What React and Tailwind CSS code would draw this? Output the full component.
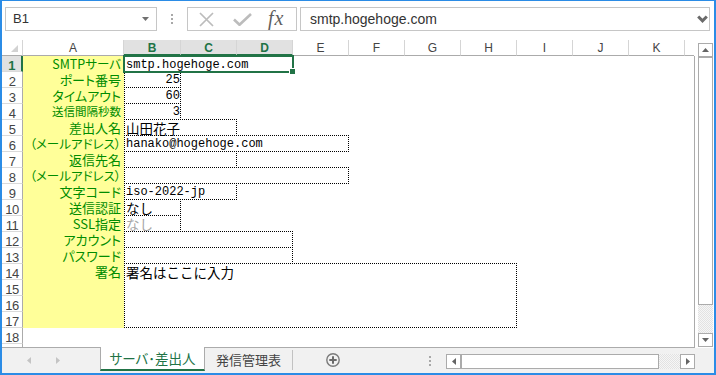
import React from "react";

const CJK = "font-['Noto_Sans_CJK_JP',sans-serif]";
const MONO = "font-['Liberation_Mono','Noto_Sans_CJK_JP',monospace]";

function VDots({ className = "" }) {
  return (
    <div className={"flex flex-col gap-[2px] shrink-0 " + className}>
      <span className="w-[2px] h-[2px] bg-[#a8a8a8]" />
      <span className="w-[2px] h-[2px] bg-[#a8a8a8]" />
      <span className="w-[2px] h-[2px] bg-[#a8a8a8]" />
    </div>
  );
}

function FormulaBar() {
  return (
    <div className="h-[39px] shrink-0 flex pl-[3px] pt-[6px] bg-white">
      <div className="w-[152px] h-[24px] shrink-0 border border-[#c6c6c6] flex items-center pl-[7px] pr-[7px]">
        <span className="flex-1 text-[13px] text-[#333]">B1</span>
        <svg width="7" height="4" viewBox="0 0 7 4">
          <path d="M0 0H7L3.5 4Z" fill="#707070" />
        </svg>
      </div>
      <VDots className="ml-[14px] mt-[7px]" />
      <div className="ml-[14px] w-[110px] h-[24px] shrink-0 border border-[#c6c6c6] flex items-center">
        <svg className="ml-[11px]" width="15" height="15" viewBox="0 0 15 15">
          <path d="M1 1L14 14M14 1L1 14" stroke="#bcbcbc" strokeWidth="1.7" />
        </svg>
        <svg className="ml-[19px]" width="19" height="13" viewBox="0 0 19 13">
          <path d="M1 6.5L6.5 11.8L18 1" stroke="#bcbcbc" strokeWidth="2.6" fill="none" />
        </svg>
        <span className="ml-[16px] font-['Liberation_Serif',serif] italic text-[20px] leading-none text-[#5f5f5f] tracking-[1px] -mt-[2px]">
          fx
        </span>
      </div>
      <div className="ml-[3px] w-[410px] h-[24px] shrink-0 border border-[#c6c6c6] flex items-center pl-[9px] pr-[1px]">
        <span className="flex-1 text-[14px] text-[#333]">smtp.hogehoge.com</span>
        <svg width="11" height="8" viewBox="0 0 11 8">
          <path d="M1.2 1.5L5.5 5.8L9.8 1.5" stroke="#6a6a6a" strokeWidth="3" fill="none" />
        </svg>
      </div>
    </div>
  );
}

const headCols = [
  ["A", "w-[101px]", false],
  ["B", "w-[57px]", true],
  ["C", "w-[56px]", true],
  ["D", "w-[56px]", true],
  ["E", "w-[56px]", false],
  ["F", "w-[56px]", false],
  ["G", "w-[56px]", false],
  ["H", "w-[56px]", false],
  ["I", "w-[56px]", false],
  ["J", "w-[56px]", false],
  ["K", "w-[56px]", false],
];

function HeaderRow() {
  return (
    <div className="h-[16px] shrink-0 flex text-[12px] leading-[17px]">
      <div className="w-[21px] h-[16px] shrink-0 border-r border-r-[#d5d5d5] border-b border-b-[#ababab] flex items-end justify-end pr-[4px] pb-[3px]">
        <svg width="7" height="7" viewBox="0 0 7 7">
          <path d="M7 0V7H0Z" fill="#d2d2d2" />
        </svg>
      </div>
      {headCols.map(([l, w, sel]) => (
        <div
          key={l}
          className={
            w +
            " h-[16px] shrink-0 text-center border-r border-r-[#d5d5d5] " +
            (sel
              ? "bg-[#e1e1e1] text-[#217346] font-bold border-b-2 border-b-[#217346]"
              : "text-[#444] border-b border-b-[#ababab]")
          }
        >
          {l}
        </div>
      ))}
      <div className="w-[9px] h-[16px] shrink-0 border-b border-b-[#ababab]" />
      <div className="w-[1px] h-[16px] shrink-0" />
    </div>
  );
}

const rowHeadStarts = [
  "row-start-1",
  "row-start-2",
  "row-start-3",
  "row-start-4",
  "row-start-5",
  "row-start-6",
  "row-start-7",
  "row-start-8",
  "row-start-9",
  "row-start-10",
  "row-start-11",
  "row-start-12",
  "row-start-13",
  "row-start-14",
  "row-start-15",
  "row-start-16",
  "row-start-17",
  "row-start-18",
];

const labels = [
  ["SMTPサーバ", "row-start-1", "text-[12.5px]"],
  ["ポート番号", "row-start-2", "text-[13px]"],
  ["タイムアウト", "row-start-3", "text-[13px]"],
  ["送信間隔秒数", "row-start-4", "text-[11.5px]"],
  ["差出人名", "row-start-5", "text-[13px]"],
  ["（メールアドレス）", "row-start-6", "text-[12.5px]"],
  ["返信先名", "row-start-7", "text-[13px]"],
  ["（メールアドレス）", "row-start-8", "text-[12.5px]"],
  ["文字コード", "row-start-9", "text-[13px]"],
  ["送信認証", "row-start-10", "text-[13px]"],
  ["SSL指定", "row-start-11", "text-[13px]"],
  ["アカウント", "row-start-12", "text-[13px]"],
  ["パスワード", "row-start-13", "text-[13px]"],
  ["署名", "row-start-14", "text-[13px]"],
  ["", "row-start-15", "text-[13px]"],
  ["", "row-start-16", "text-[13px]"],
  ["", "row-start-17", "text-[13px]"],
];

const boxes = [
  ["col-start-3 row-start-2", "25", "mono-r"],
  ["col-start-3 row-start-3", "60", "mono-r"],
  ["col-start-3 row-start-4", "3", "mono-r"],
  ["col-start-3 col-span-2 row-start-5", "山田花子", "cjk"],
  ["col-start-3 col-span-4 row-start-6", "hanako@hogehoge.com", "mono"],
  ["col-start-3 col-span-2 row-start-7", "", "mono"],
  ["col-start-3 col-span-4 row-start-8", "", "mono"],
  ["col-start-3 col-span-2 row-start-9", "iso-2022-jp", "mono"],
  ["col-start-3 row-start-10", "なし", "cjk"],
  ["col-start-3 row-start-11", "なし", "cjk-gray"],
  ["col-start-3 col-span-3 row-start-12", "", "mono"],
  ["col-start-3 col-span-3 row-start-13", "", "mono"],
  ["col-start-3 col-span-7 row-start-14 row-span-4", "署名はここに入力", "cjk"],
];

const boxStyle = {
  mono: MONO + " text-[12px] leading-[17px] text-black pl-[1px]",
  "mono-r": MONO + " text-[12px] leading-[17px] text-black text-right pr-0",
  cjk: CJK + " text-[13.5px] leading-[15px] pt-[1px] text-black pl-[1px]",
  "cjk-gray": CJK + " text-[13.5px] leading-[15px] pt-[1px] text-[#a6a6a6] pl-[1px]",
};

function Body() {
  return (
    <div className="grid grid-cols-[21px_101px_57px_repeat(9,56px)_9px] grid-rows-[repeat(18,16px)_3px] w-[693px] h-[292px] shrink-0 border-r border-b border-[#ababab] bg-white">
      {rowHeadStarts.map((rs, i) => (
        <div
          key={rs}
          className={
            "col-start-1 " +
            rs +
            " border-b border-b-[#dadada] text-center text-[13px] leading-[20px] tracking-[-0.5px] " +
            (i === 0
              ? "bg-[#e1e1e1] text-[#217346] font-bold border-r-2 border-r-[#217346]"
              : "text-[#444] border-r border-r-[#ababab]")
          }
        >
          {i + 1}
        </div>
      ))}
      <div className="col-start-1 row-start-19 border-r border-r-[#ababab]" />

      {labels.map(([t, rs, size], i) => (
        <div
          key={i}
          className={
            "col-start-2 " +
            rs +
            " bg-[#ffff99] flex justify-end pr-[3px] whitespace-nowrap text-[#008c00] leading-[15px] [font-feature-settings:'palt'] " +
            CJK +
            " " +
            size
          }
        >
          {t}
        </div>
      ))}

      {boxes.map(([pos, t, st], i) => (
        <div
          key={i}
          className={
            pos +
            " -mt-px border border-dotted border-black whitespace-nowrap " +
            boxStyle[st]
          }
        >
          {t}
        </div>
      ))}

      <div
        className={
          "col-start-3 col-span-3 row-start-1 -ml-px -mr-px -mt-px -mb-px border-2 border-[#217346] relative whitespace-nowrap pl-[1px] text-[12px] leading-[16px] text-black " +
          MONO
        }
      >
        smtp.hogehoge.com
        <span className="absolute right-[-4px] bottom-[-4px] w-[7px] h-[7px] bg-[#217346] border border-white" />
      </div>
    </div>
  );
}

function ScrollBtn({ dir }) {
  const paths = {
    left: "M4 0V7L0 3.5Z",
    right: "M0 0L4 3.5L0 7Z",
  };
  return (
    <div className="w-[15px] h-[15px] shrink-0 border border-[#ababab] bg-white flex items-center justify-center">
      <svg width="4" height="7" viewBox="0 0 4 7">
        <path d={paths[dir]} fill="#646464" />
      </svg>
    </div>
  );
}

const checker =
  "bg-[repeating-conic-gradient(#e2e2e2_0_25%,#f6f6f6_0_50%)] bg-[length:2px_2px]";

function VScroll() {
  return (
    <div className="w-[19px] shrink-0 pl-[3px] pt-[3px] flex flex-col bg-white">
      <div className="w-[15px] h-[14px] shrink-0 border border-[#ababab] bg-white flex items-center justify-center">
        <svg width="7" height="4" viewBox="0 0 7 4">
          <path d="M0 4L3.5 0L7 4Z" fill="#646464" />
        </svg>
      </div>
      <div className="w-[15px] h-[248px] shrink-0 border border-[#ababab] bg-white" />
      <div className={"w-[15px] h-[28px] shrink-0 " + checker} />
      <div className="w-[15px] h-[14px] shrink-0 border border-[#ababab] bg-white flex items-center justify-center">
        <svg width="7" height="4" viewBox="0 0 7 4">
          <path d="M0 0H7L3.5 4Z" fill="#646464" />
        </svg>
      </div>
    </div>
  );
}

function TabBar() {
  return (
    <div className="h-[25px] shrink-0 bg-[#f1f1f1] flex items-start">
      <div className="w-[98px] h-[25px] shrink-0 flex items-center pl-[25px]">
        <svg width="4" height="7" viewBox="0 0 4 7">
          <path d="M4 0V7L0 3.5Z" fill="#c4c4c4" />
        </svg>
        <svg className="ml-[25px]" width="4" height="7" viewBox="0 0 4 7">
          <path d="M0 0L4 3.5L0 7Z" fill="#c4c4c4" />
        </svg>
      </div>
      <div
        className={
          "w-[105px] h-[24px] -mt-px shrink-0 bg-white border-x border-x-[#ababab] border-b-2 border-b-[#217346] flex items-center justify-center text-[13.5px] text-[#217346] [font-feature-settings:'palt'] " +
          CJK
        }
      >
        サーバ･差出人
      </div>
      <div
        className={
          "w-[87px] h-[23px] shrink-0 flex items-center justify-center text-[13px] text-[#444] " +
          CJK
        }
      >
        発信管理表
      </div>
      <div className="w-[1px] h-[20px] mt-[2px] shrink-0 bg-[#c2c2c2]" />
      <svg className="ml-[33px] mt-[5px] shrink-0" width="14" height="14" viewBox="0 0 14 14">
        <circle cx="7" cy="7" r="6.2" fill="none" stroke="#7a7a7a" strokeWidth="1.4" />
        <path d="M7 3.3V10.7M3.3 7H10.7" stroke="#6a6a6a" strokeWidth="2" />
      </svg>
      <VDots className="ml-[89px] mt-[8px]" />
      <div className="ml-[15px] mt-[6px] flex shrink-0">
        <ScrollBtn dir="left" />
        <div className="w-[198px] h-[15px] shrink-0 border border-[#ababab] bg-white" />
        <div className={"w-[21px] h-[15px] shrink-0 " + checker} />
        <ScrollBtn dir="right" />
      </div>
    </div>
  );
}

export default function App() {
  return (
    <div className="w-[716px] h-[375px] overflow-hidden bg-white border-t border-l-2 border-r-2 border-b-2 border-[#2b8ce6] flex flex-col font-['Liberation_Sans',sans-serif]">
      <FormulaBar />
      <div className="flex h-[308px] shrink-0">
        <div className="w-[693px] shrink-0 flex flex-col">
          <HeaderRow />
          <Body />
        </div>
        <VScroll />
      </div>
      <TabBar />
    </div>
  );
}
